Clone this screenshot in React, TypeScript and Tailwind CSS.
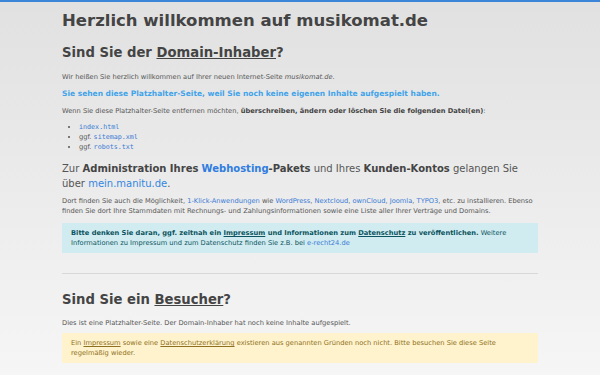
export default function App() {
  const link = 'text-[#3a7bd5]';
  const mono = "font-['DejaVu_Sans_Mono',monospace] text-[#3a7bd5]";
  return (
    <div className="min-h-[375px] bg-gradient-to-b from-[#e1e1e1] to-[#f6f6f6] border-t-2 border-[#3b86d9] font-['DejaVu_Sans',sans-serif] text-[#555]">
      <div className="w-[476px] mx-auto pt-[7px] pb-4">
        <h1 className="text-[16.5px] font-bold text-[#444] leading-[24px]">Herzlich willkommen auf musikomat.de</h1>

        <h2 className="mt-[10px] text-[13.2px] font-bold text-[#444] leading-[20px]">
          Sind Sie der <span className="underline">Domain-Inhaber</span>?
        </h2>

        <p className="mt-[9px] text-[6.7px] leading-[10px]">
          Wir heißen Sie herzlich willkommen auf Ihrer neuen Internet-Seite <em>musikomat.de</em>.
        </p>

        <p className="mt-[7px] text-[7.5px] font-bold text-[#3fa3ea] leading-[10px]">
          Sie sehen diese Platzhalter-Seite, weil Sie noch keine eigenen Inhalte aufgespielt haben.
        </p>

        <p className="mt-[7px] text-[6.7px] leading-[10px]">
          Wenn Sie diese Platzhalter-Seite entfernen möchten, <b className="text-[#444]">überschreiben, ändern oder löschen Sie die folgenden Datei(en)</b>:
        </p>

        <ul className="mt-[6px] pl-[17px] list-disc text-[6.7px] leading-[10px]">
          <li><code className={mono}>index.html</code></li>
          <li>ggf. <code className={mono}>sitemap.xml</code></li>
          <li>ggf. <code className={mono}>robots.txt</code></li>
        </ul>

        <p className="mt-[9px] text-[10px] leading-[15px]">
          Zur <b className="text-[#444]">Administration Ihres</b> <b className="text-[#2f7de1]">Webhosting</b><b className="text-[#444]">-Pakets</b> und Ihres <b className="text-[#444]">Kunden-Kontos</b> gelangen Sie über <span className="text-[#3386e0]">mein.manitu.de</span>.
        </p>

        <p className="mt-[5px] text-[6.7px] leading-[10px]">
          Dort finden Sie auch die Möglichkeit, <span className={link}>1-Klick-Anwendungen</span> wie <span className={link}>WordPress</span>, <span className={link}>Nextcloud</span>, <span className={link}>ownCloud</span>, <span className={link}>Joomla</span>, <span className={link}>TYPO3</span>, etc. zu installieren. Ebenso finden Sie dort Ihre Stammdaten mit Rechnungs- und Zahlungsinformationen sowie eine Liste aller Ihrer Verträge und Domains.
        </p>

        <div className="mt-[7px] bg-[#d1ecf1] text-[#0c5460] px-[9px] py-[5px] text-[6.7px] leading-[10px]">
          <b>Bitte denken Sie daran, ggf. zeitnah ein <span className="underline">Impressum</span> und Informationen zum <span className="underline">Datenschutz</span> zu veröffentlichen.</b> Weitere Informationen zu Impressum und zum Datenschutz finden Sie z.B. bei <span className={link}>e-recht24.de</span>
        </div>

        <hr className="mt-[20px] border-t border-[#d8d8d8]" />

        <h2 className="mt-[16px] text-[13.2px] font-bold text-[#444] leading-[20px]">
          Sind Sie ein <span className="underline">Besucher</span>?
        </h2>

        <p className="mt-[8px] text-[6.7px] leading-[10px]">
          Dies ist eine Platzhalter-Seite. Der Domain-Inhaber hat noch keine Inhalte aufgespielt.
        </p>

        <div className="mt-[5px] bg-[#fff3cd] text-[#8f7020] px-[9px] py-[5px] text-[6.7px] leading-[10px]">
          Ein <span className="underline">Impressum</span> sowie eine <span className="underline">Datenschutzerklärung</span> existieren aus genannten Gründen noch nicht. Bitte besuchen Sie diese Seite regelmäßig wieder.
        </div>
      </div>
    </div>
  );
}
